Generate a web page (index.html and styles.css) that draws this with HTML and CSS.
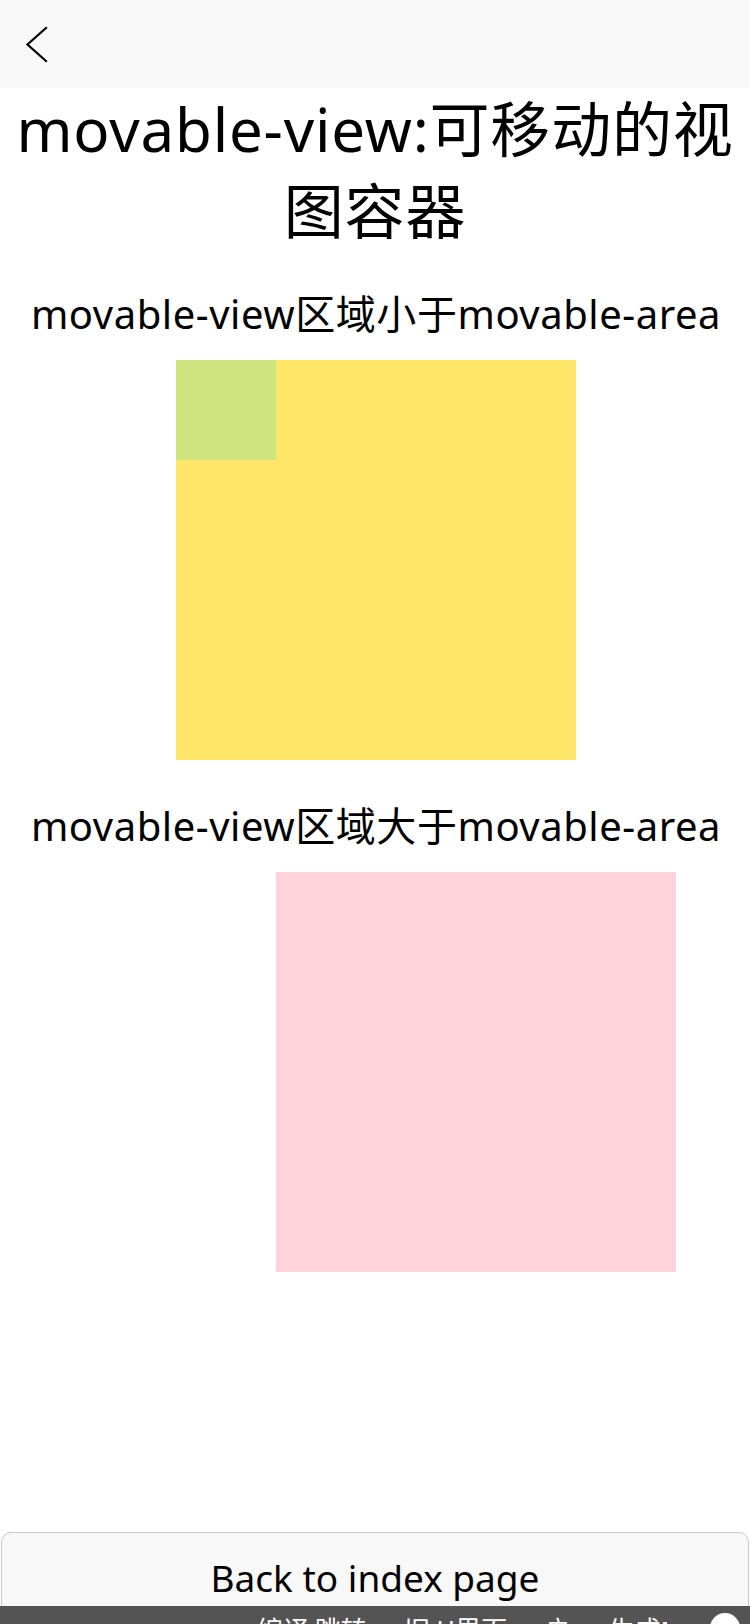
FILE: index.html
```html
<!DOCTYPE html>
<html lang="zh-CN">
<head>
<meta charset="utf-8">
<meta name="viewport" content="width=750">
<title>movable-view</title>
<link rel="stylesheet" href="styles.css">
</head>
<body>
<div class="page">
  <header class="navbar">
    <svg class="back-icon" width="24" height="40" viewBox="0 0 24 40" aria-hidden="true">
      <polyline points="22,4 3.5,20.5 22,37" fill="none" stroke="#000" stroke-width="2.2" stroke-linecap="square" stroke-linejoin="miter"/>
    </svg>
  </header>
  <main class="content">
    <h1 class="title">movable-view:可移动的视图容器</h1>
    <section class="demo">
      <p class="demo-label">movable-view区域小于movable-area</p>
      <div class="area area-small">
        <div class="view view-small"></div>
      </div>
    </section>
    <section class="demo">
      <p class="demo-label">movable-view区域大于movable-area</p>
      <div class="area area-large">
        <div class="view view-large"></div>
      </div>
    </section>
  </main>
  <footer class="footer">
    <button class="back-btn" type="button">Back to index page</button>
  </footer>
  <div class="console-bar">
    <span class="console-text">编译 跳转 · 旧 H界面 · 户 · 生成中</span>
    <span class="console-dot"></span>
  </div>
</div>
</body>
</html>
```

FILE: styles.css
```css
* {
  box-sizing: border-box;
}

html, body {
  margin: 0;
  padding: 0;
  background: #ffffff;
}

body {
  font-family: "Noto Sans", "Noto Sans CJK SC", sans-serif;
  color: #000000;
}

.page {
  min-height: 1624px;
  display: flex;
  flex-direction: column;
}

.navbar {
  height: 88px;
  background: #f8f8f8;
  display: flex;
  align-items: flex-start;
  padding: 24px 0 0 24px;
}

.back-icon {
  display: block;
}

.content {
  display: flex;
  flex-direction: column;
}

.title {
  margin: 0;
  padding: 0 8px;
  font-size: 60px;
  font-weight: 400;
  line-height: 82px;
  letter-spacing: 0.8px;
  text-align: center;
}

.demo {
  display: flex;
  flex-direction: column;
  align-items: center;
  gap: 18px;
  padding: 34px 0 0 2px;
}

.demo + .demo {
  padding-top: 38px;
}

.demo-label {
  margin: 0;
  font-size: 40px;
  line-height: 56px;
  letter-spacing: 0.55px;
  text-align: center;
  white-space: nowrap;
}

.area {
  position: relative;
  width: 400px;
  height: 400px;
}

.area-small {
  background: #fee567;
}

.view-small {
  width: 100px;
  height: 100px;
  background: #cfe37e;
}

.area-large {
  background: transparent;
}

.view-large {
  position: absolute;
  left: 100px;
  top: 0;
  width: 400px;
  height: 400px;
  background: #ffd3da;
}

.footer {
  margin-top: auto;
  padding: 0 1px;
}

.back-btn {
  display: flex;
  align-items: center;
  justify-content: center;
  width: 100%;
  height: 92px;
  margin: 0;
  padding: 0;
  border: 1px solid #c8c8c8;
  border-radius: 10px;
  background: #f8f8f8;
  color: #000000;
  font-family: "Noto Sans", "Noto Sans CJK SC", sans-serif;
  font-size: 37px;
  line-height: 50px;
}

.console-bar {
  position: fixed;
  left: 0;
  right: 0;
  bottom: 0;
  height: 18px;
  background: #545454;
  overflow: hidden;
  display: flex;
  align-items: flex-start;
  padding-left: 257px;
  color: #ffffff;
}

.console-text {
  flex: 0 1 auto;
  max-width: 410px;
  overflow: hidden;
  margin-top: 3px;
  font-family: "Noto Sans CJK SC", sans-serif;
  font-size: 26px;
  line-height: 40px;
  white-space: nowrap;
}

.console-dot {
  margin-left: auto;
  margin-right: 10px;
  margin-top: 7px;
  width: 30px;
  height: 30px;
  border-radius: 50%;
  background: #ffffff;
  flex: none;
}
```
